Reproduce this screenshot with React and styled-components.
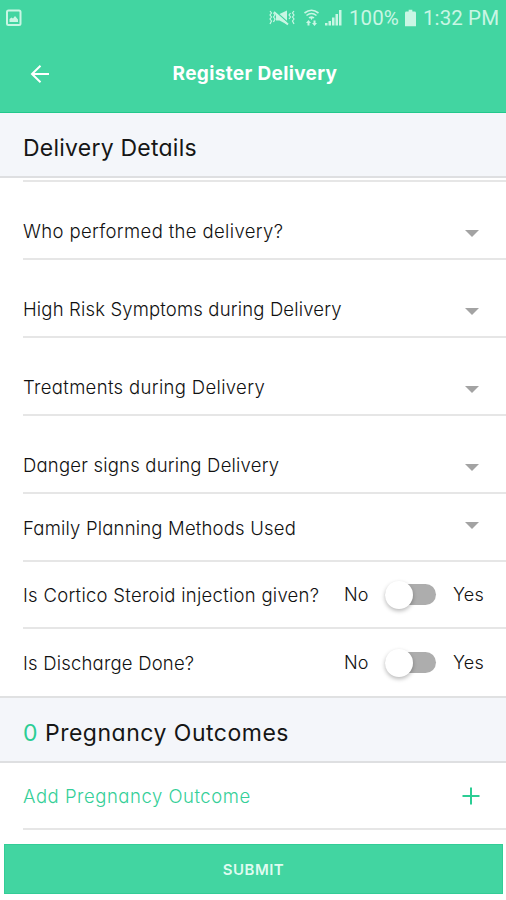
import React, { useState } from "react";
import styled, { createGlobalStyle } from "styled-components";

const GlobalStyle = createGlobalStyle`
  * {
    box-sizing: border-box;
  }
  body {
    margin: 0;
    background: #fff;
    font-family: Inter, "Liberation Sans", sans-serif;
    font-feature-settings: "cv11";
  }
`;

const Screen = styled.div`
  width: 506px;
  height: 900px;
  display: flex;
  flex-direction: column;
  overflow: hidden;
  background: #fff;
`;

const Header = styled.header`
  height: 113px;
  flex: none;
  background: #42d5a1;
  border-bottom: 1px solid #22c88c;
`;

const StatusBar = styled.div`
  height: 36px;
  display: flex;
  align-items: center;
  padding: 0 6px 0 5px;
  color: #c9f6e4;
  font-family: Roboto, sans-serif;
  font-size: 20.5px;
`;

const StatusIcons = styled.svg`
  display: block;
  flex: none;
  margin-left: ${({ $left }) => $left || 0}px;
`;

const StatusText = styled.span`
  flex: none;
  width: ${({ $width }) => $width}px;
  margin-left: ${({ $left }) => $left}px;
  line-height: 36px;
  letter-spacing: 0.1px;
  white-space: nowrap;
`;

const TitleBar = styled.div`
  height: 75px;
  display: grid;
  grid-template-columns: 80px 1fr 76px;
  align-items: center;
  color: #fff;
`;

const BackButton = styled.button`
  height: 40px;
  padding: 0 0 0 29px;
  border: 0;
  background: none;
  color: inherit;
  svg {
    display: block;
  }
`;

const Title = styled.h1`
  margin: 0;
  font-size: 19px;
  font-weight: 700;
  letter-spacing: ${({ $spacing }) => $spacing}px;
  text-align: center;
  white-space: nowrap;
`;

const SectionTitle = styled.h2`
  flex: none;
  height: ${({ $height }) => $height}px;
  margin: 0;
  padding: ${({ $top }) => $top}px 0 0 23px;
  border-top: ${({ $line }) => ($line ? "2px solid #e0e1e2" : "0")};
  border-bottom: 2px solid #dedfe1;
  background: #f4f6fa;
  color: #161616;
  font-size: 23px;
  font-weight: 400;
  line-height: 30px;
  letter-spacing: ${({ $spacing }) => $spacing}px;
  white-space: nowrap;
`;

const Count = styled.span`
  color: #2bcd94;
`;

const Row = styled.div`
  flex: none;
  height: ${({ $height }) => $height}px;
  margin-left: 23px;
  padding-top: ${({ $top }) => $top || 0}px;
  display: flex;
  align-items: flex-start;
  border-bottom: ${({ $last }) => ($last ? "0" : "2px solid #e6e6e6")};
  color: ${({ $accent }) => ($accent ? "#35cf98" : "#111")};
`;

const Label = styled.span`
  flex: 1;
  font-size: 18.5px;
  font-weight: 300;
  line-height: 24px;
  letter-spacing: ${({ $spacing }) => $spacing}px;
  white-space: nowrap;
`;

const Caret = styled.span`
  margin: ${({ $top }) => $top}px 27px 0 0;
  border: 7px solid transparent;
  border-top-color: #a3a3a3;
  border-bottom: 0;
`;

const Choice = styled.span`
  width: ${({ $width }) => $width}px;
  font-size: 18px;
  font-weight: 300;
  line-height: 24px;
  letter-spacing: 0.2px;
`;

const Track = styled.button`
  width: 51px;
  height: 21px;
  margin: 1px 17px 0 0;
  padding: 0;
  display: flex;
  align-items: center;
  justify-content: ${({ $on }) => ($on ? "flex-end" : "flex-start")};
  border: 0;
  border-radius: 11px;
  background: #adadad;
`;

const Thumb = styled.span`
  flex: none;
  width: 28px;
  height: 28px;
  border-radius: 50%;
  background: #fff;
  box-shadow: 0 2px 4px rgba(0, 0, 0, 0.28);
`;

const PlusIcon = styled.svg`
  flex: none;
  margin: 3px 26px 0 0;
`;

const Submit = styled.button`
  flex: none;
  height: 50px;
  margin: 14px 3px 0 4px;
  padding: 1px 0 0;
  border: 1px solid #33cd97;
  background: #42d5a1;
  color: #dffbf0;
  font: 600 15px Inter, sans-serif;
  letter-spacing: ${({ $spacing }) => $spacing}px;
`;

const selects = [
  { label: "Who performed the delivery?", spacing: 0.36, height: 78, top: 37, caret: 11 },
  { label: "High Risk Symptoms during Delivery", spacing: 0.16, height: 78, top: 37, caret: 11 },
  { label: "Treatments during Delivery", spacing: 0.34, height: 78, top: 37, caret: 11 },
  { label: "Danger signs during Delivery", spacing: 0.2, height: 78, top: 37, caret: 11 },
  { label: "Family Planning Methods Used", spacing: 0.19, height: 68, top: 22, caret: 6 },
];

const toggles = [
  { label: "Is Cortico Steroid injection given?", spacing: 0.27, height: 67, top: 21 },
  { label: "Is Discharge Done?", spacing: 0.2, height: 67, top: 22, last: true },
];

const ToggleRow = ({ label, spacing, height, top, last }) => {
  const [on, setOn] = useState(false);

  return (
    <Row $height={height} $top={top} $last={last}>
      <Label $spacing={spacing}>{label}</Label>
      <Choice $width={41}>No</Choice>
      <Track $on={on} onClick={() => setOn(!on)}>
        <Thumb />
      </Track>
      <Choice $width={53}>Yes</Choice>
    </Row>
  );
};

const App = () => {
  return (
    <Screen>
      <GlobalStyle />
      <Header>
        {/* Android status bar */}
        <StatusBar>
          <StatusIcons width="17" height="18" viewBox="0 0 17 18">
            <rect x="2" y="1.5" width="13.5" height="14.5" rx="1.5" fill="none" stroke="currentColor" strokeWidth="2" />
            <path d="M4.5 13V10l2-1.5 1.5 1 2-2.5 3 3.5V13z" fill="currentColor" />
          </StatusIcons>
          <StatusIcons $left={246} width="75" height="20" viewBox="0 0 75 20">
            {/* muted, vibrating */}
            <path
              d="M2 3l1.5 2L2 7l1.5 2L2 11l1.5 2L2 16M5.5 5L7 7 5.500 9 7 11 5.500 14M26 3l-1.5 2L26 7l-1.5 2L26 11l-1.5 2L26 16M22.500 5L21 7l1.5 2L21 11"
              fill="none"
              stroke="currentColor"
              strokeWidth="1.2"
            />
            <path d="M8 6h3.5L19 2.500v14L11.500 12.500H8z" fill="currentColor" />
            <path d="M7 3l14 12.500" stroke="#42d5a1" strokeWidth="1.6" />
            <path d="M6 4l14 12.500" stroke="currentColor" strokeWidth="1.8" />
            {/* wifi */}
            <path
              d="M36.500 5Q43.500-.5 50.500 5M38.500 7.500Q43.500 3.500 48.500 7.500M41 10Q43.500 8 46 10"
              fill="none"
              stroke="currentColor"
              strokeWidth="1.6"
            />
            <path d="M41.500 9h4l-2 3zM39.500 17.500v-2.500h-1.500l2.500-3 2.500 3h-1.500v2.500zM45.500 12.500h2v2.500H49l-2.500 3-2.500-3h1.500z" fill="currentColor" />
            {/* signal */}
            <path d="M57 17.500v-2.500h2.500v2.500zM60.500 17.500v-4.500H63v4.500zM64 17.500V9.500h2.500v8zM67.500 17.500V6H70v11.500zM71 17.500V2h2.500v15.500z" fill="currentColor" />
          </StatusIcons>
          <StatusText $left={6} $width={53}>100%</StatusText>
          <StatusIcons $left={3} width="11" height="18" viewBox="0 0 12 18">
            <path d="M4 0h4v2h2.500q1.500 0 1.500 1.500V18H0V3.500Q0 2 1.500 2H4z" fill="currentColor" />
          </StatusIcons>
          <StatusText $left={7} $width={78}>1:32 PM</StatusText>
        </StatusBar>
        <TitleBar>
          <BackButton aria-label="Back">
            <svg width="20" height="20" viewBox="0 0 20 20" fill="none" stroke="currentColor" strokeWidth="2">
              <path d="M20.500 10H3M11.500 1.700L3 10l8.500 8.300" />
            </svg>
          </BackButton>
          <Title $spacing={0.35}>Register Delivery</Title>
        </TitleBar>
      </Header>

      <SectionTitle $height={65} $top={20} $spacing={0.23}>
        Delivery Details
      </SectionTitle>
      {/* Tail of the field scrolled under the section title */}
      <Row $height={4} />
      {selects.map(({ label, spacing, height, top, caret }) => (
        <Row key={label} $height={height} $top={top}>
          <Label $spacing={spacing}>{label}</Label>
          <Caret $top={caret} />
        </Row>
      ))}
      {toggles.map((toggle) => (
        <ToggleRow key={toggle.label} {...toggle} />
      ))}

      <SectionTitle $height={67} $top={20} $spacing={0.5} $line>
        <Count>0</Count> Pregnancy Outcomes
      </SectionTitle>
      <Row $height={67} $top={21} $accent>
        <Label $spacing={0.53}>Add Pregnancy Outcome</Label>
        <PlusIcon width="18" height="18" viewBox="0 0 18 18" stroke="#2bcd94" strokeWidth="2">
          <path d="M9 .5v17M.5 9h17" />
        </PlusIcon>
      </Row>
      <Submit $spacing={0.5}>SUBMIT</Submit>
    </Screen>
  );
};

export default App;
